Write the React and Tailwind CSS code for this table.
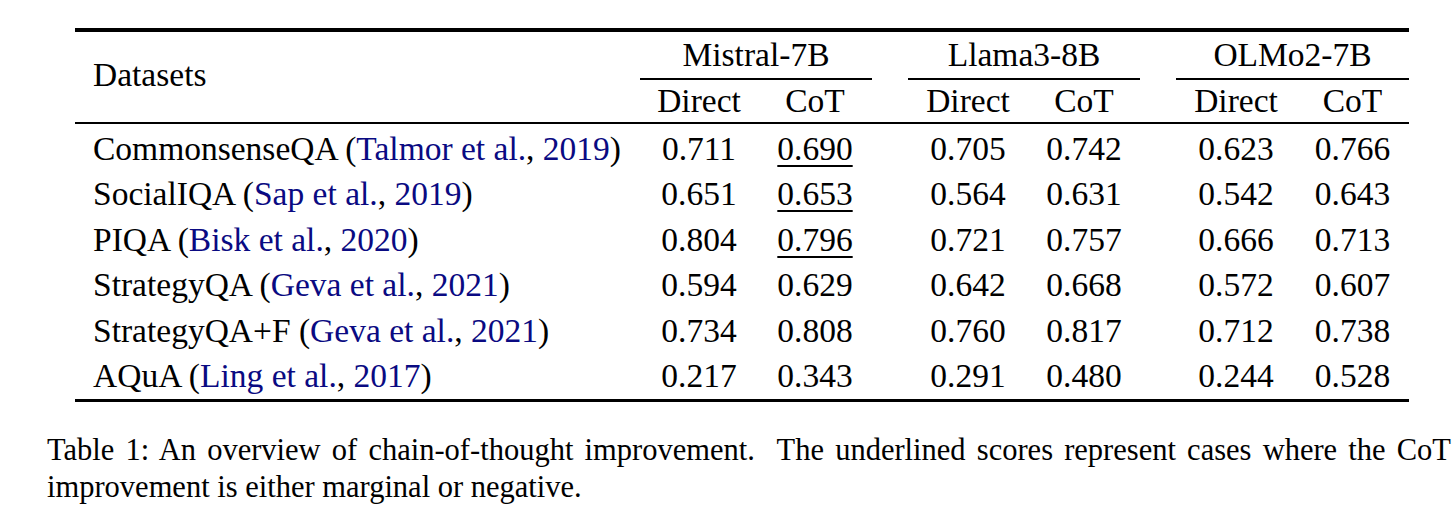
const rows = [
  { name: 'CommonsenseQA', cite: 'Talmor et al.', year: '2019', vals: ['0.711', '0.690', '0.705', '0.742', '0.623', '0.766'], under: [1] },
  { name: 'SocialIQA', cite: 'Sap et al.', year: '2019', vals: ['0.651', '0.653', '0.564', '0.631', '0.542', '0.643'], under: [1] },
  { name: 'PIQA', cite: 'Bisk et al.', year: '2020', vals: ['0.804', '0.796', '0.721', '0.757', '0.666', '0.713'], under: [1] },
  { name: 'StrategyQA', cite: 'Geva et al.', year: '2021', vals: ['0.594', '0.629', '0.642', '0.668', '0.572', '0.607'], under: [] },
  { name: 'StrategyQA+F', cite: 'Geva et al.', year: '2021', vals: ['0.734', '0.808', '0.760', '0.817', '0.712', '0.738'], under: [] },
  { name: 'AQuA', cite: 'Ling et al.', year: '2017', vals: ['0.217', '0.343', '0.291', '0.480', '0.244', '0.528'], under: [] },
];

const models = ['Mistral-7B', 'Llama3-8B', 'OLMo2-7B'];

// 565 | 118 114 | 36 | 120 112 | 36 | 120 113
const cols = 'grid grid-cols-[565px_118px_114px_36px_120px_112px_36px_120px_113px]';
const valueCols = [2, 3, 5, 6, 8, 9];
const colStart = ['', 'col-start-2', 'col-start-3', 'col-start-4', 'col-start-5', 'col-start-6', 'col-start-7', 'col-start-8', 'col-start-9'];

const Cite = ({ who, year }) => (
  <>
    {'('}
    <span className="text-[#0a0a82]">{who}</span>
    {', '}
    <span className="text-[#0a0a82]">{year}</span>
    {')'}
  </>
);

export default function App() {
  return (
    <div className="w-[1456px] h-[520px] bg-white text-black font-['Liberation_Serif',serif] overflow-hidden">
      <div className="pt-[28px] pl-[75px]">
        <div className="w-[1334px]">
          <div className="h-[4px] bg-black" />

          {/* header */}
          <div className={`${cols} grid-rows-[46px_1.5px_42.5px] text-[33.5px] leading-none`}>
            <div className="row-span-3 col-start-1 flex items-center pl-[18px] pb-[5px]">Datasets</div>
            <div className="col-start-2 col-span-2 row-start-1 flex items-center justify-center">{models[0]}</div>
            <div className="col-start-5 col-span-2 row-start-1 flex items-center justify-center">{models[1]}</div>
            <div className="col-start-8 col-span-2 row-start-1 flex items-center justify-center">{models[2]}</div>
            <div className="col-start-2 col-span-2 row-start-2 bg-black" />
            <div className="col-start-5 col-span-2 row-start-2 bg-black" />
            <div className="col-start-8 col-span-2 row-start-2 bg-black" />
            {valueCols.map((c, i) => (
              <div key={c} className={`${colStart[c - 1]} row-start-3 flex items-center justify-center`}>
                {i % 2 === 0 ? 'Direct' : 'CoT'}
              </div>
            ))}
          </div>

          <div className="h-[1.5px] bg-black" />

          {/* body */}
          <div className="pt-[2px]">
            {rows.map(r => (
              <div key={r.name + r.vals[0]} className={`${cols} h-[45.5px] text-[33.5px] leading-none`}>
                <div className="flex items-center pl-[18px] whitespace-pre">
                  {r.name + ' '}
                  <Cite who={r.cite} year={r.year} />
                </div>
                {r.vals.map((v, i) => (
                  <div key={i} className={`${colStart[valueCols[i] - 1]} flex items-center justify-center`}>
                    <span className={r.under.includes(i) ? 'underline decoration-[1.5px] underline-offset-[5px]' : ''}>{v}</span>
                  </div>
                ))}
              </div>
            ))}
          </div>

          <div className="h-[3.5px] bg-black" />
        </div>
      </div>

      <div className="pl-[47px] pt-[30px] w-[1451px] text-[30.5px] leading-[37px] text-justify">
        Table 1: An overview of chain-of-thought improvement.&nbsp; The underlined scores represent cases where the CoT improvement is either marginal or negative.
      </div>
    </div>
  );
}
